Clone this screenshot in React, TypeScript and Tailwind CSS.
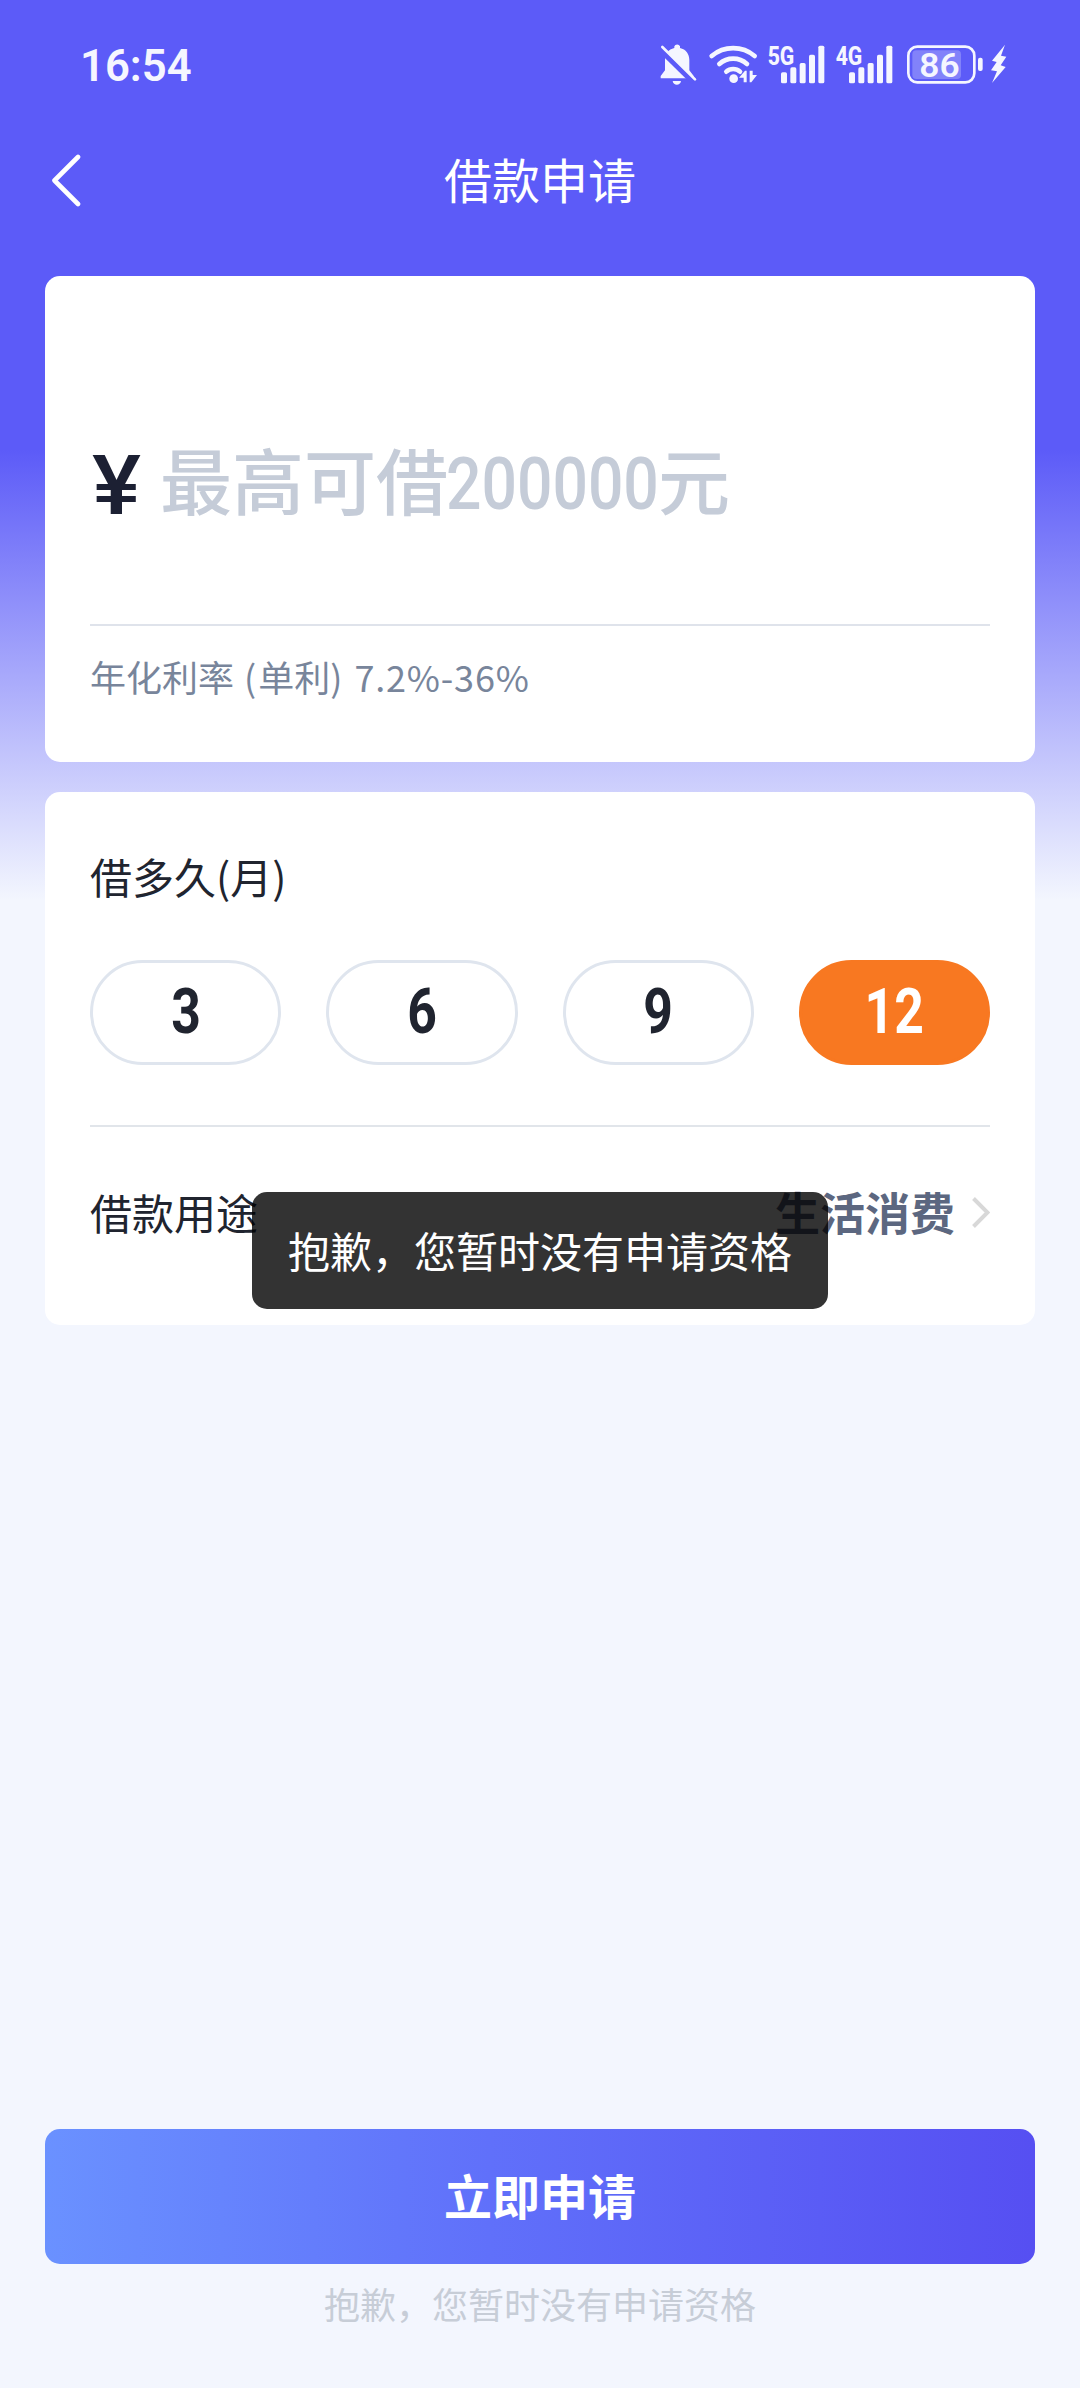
import { useState } from 'react'
import clsx from 'clsx'

const terms = [3, 6, 9, 12]

const bars = [
    { x: 42, y: 97 },
    { x: 70, y: 82 },
    { x: 98, y: 69 },
    { x: 126, y: 44 },
    { x: 154, y: 17 },
]

function Signal({ label }: { label: string }) {
    return (
        <svg className="h-[50px] w-[59px]" viewBox="0 0 177 150" fill="#f5f6ff">
            <text
                x="2" y="74" fontSize="75" fontWeight="800" textLength="80" lengthAdjust="spacingAndGlyphs"
                className="font-[Roboto,sans-serif]"
            >
                {label}
            </text>
            {bars.map(({ x, y }) => (
                <rect key={x} x={x} y={y} width="18" height={130 - y} rx="5" />
            ))}
        </svg>
    )
}

function StatusBar() {
    return (
        <div className="flex h-[120px] items-start justify-between pt-10 pr-[73px] pl-20 text-[#f5f6ff]">
            <span className="origin-left scale-x-[0.97] pt-px font-[Roboto,sans-serif] text-[45px] leading-[50px] font-semibold">16:54</span>
            <div className="flex">
                {/* Muted bell */}
                <svg className="mr-[11px] h-[50px] w-[37px]" viewBox="60 30 111 150" fill="#f5f6ff">
                    <path d="M103 49a9 8 0 0 1 17 0v5c18 4 28 18 28 36v31l13 17v7H62v-7l13-17V90c0-18 10-32 28-36z" />
                    <path d="M98 153h25c-2 15-23 15-25 0z" />
                    <path d="M57 55L160 156" stroke="#5c5bf8" strokeWidth="17" />
                    <path d="M67 51L165 148" stroke="#f5f6ff" strokeWidth="8" strokeLinecap="round" />
                </svg>
                {/* Wi-Fi with traffic arrows */}
                <svg className="mr-[9px] h-[50px] w-[50px]" viewBox="204 30 150 150" fill="#f5f6ff">
                    <g fill="none" stroke="#f5f6ff" strokeWidth="14" strokeLinecap="round">
                        <path d="M215 78A100 100 0 0 1 344 78" />
                        <path d="M238 102A62 62 0 0 1 321 102" />
                        <path d="M259 125A30 30 0 0 1 300 125" />
                    </g>
                    <circle cx="281" cy="146" r="13" />
                    <path d="M297 143L315 122H320V157H311V143Z" />
                    <path d="M329 122H338V135H351L334 157H329Z" />
                </svg>
                <div className="flex gap-[9px]">
                    <Signal label="5G" />
                    <Signal label="4G" />
                </div>
                {/* Battery */}
                <svg className="ml-[13px] h-[50px] w-[77px]" viewBox="801 30 231 150" fill="#f5f6ff">
                    <rect x="817" y="61" width="146" height="86" rx="12" opacity="0.25" />
                    <rect x="805" y="50" width="198" height="107" rx="27" fill="none" stroke="#f5f6ff" strokeWidth="8" />
                    <rect x="1014" y="83" width="14" height="40" rx="6" />
                    <text
                        x="838" y="140" fontSize="101" fontWeight="600" textLength="121" lengthAdjust="spacingAndGlyphs"
                        className="font-[Roboto,sans-serif]"
                    >
                        86
                    </text>
                </svg>
                <svg className="ml-[5px] h-[50px] w-[18px]" viewBox="1047 30 54 150" fill="#f5f6ff">
                    <path d="M1095 44L1056 92L1070 96L1053 121L1071 124L1056 159L1097 111L1082 106L1099 80L1083 77Z" />
                </svg>
            </div>
        </div>
    )
}

export default function App() {
    const [term, setTerm] = useState(12)

    return (
        <div className="relative flex h-[2388px] w-[1080px] flex-col bg-[#f3f6fe] bg-[linear-gradient(180deg,#5c5bf8_50%,#f3f6fe_100%)] bg-[length:100%_900px] bg-no-repeat font-['Noto_Sans_CJK_SC',sans-serif]">
            <StatusBar />

            {/* Title bar */}
            <header className="grid h-[120px] grid-cols-[1fr_auto_1fr] items-center px-[50px]">
                <svg className="h-[54px] w-8" viewBox="0 0 32 54" fill="none" stroke="white" strokeWidth="4.6" strokeLinecap="round" strokeLinejoin="round">
                    <path d="M28 4L4.500 27.500L28 51" />
                </svg>
                <h1 className="pb-1 text-[48px] leading-[60px] text-white">借款申请</h1>
            </header>

            <main className="mt-9 flex flex-col gap-[30px] px-[45px]">
                {/* Amount */}
                <section className="h-[486px] rounded-[15px] bg-white px-[45px] pt-[150px]">
                    <div className="flex h-[110px] items-center">
                        <span className="w-[70px] pt-[10px] pl-[2px]">
                            <span className="inline-block origin-left scale-x-[1.1] font-[Roboto,sans-serif] text-[84px] leading-[110px] font-medium text-[#1c2033]">¥</span>
                        </span>
                        <div className="flex items-baseline text-[72px] leading-[110px] font-medium whitespace-nowrap text-[#c5ccd8]">
                            <span>最高可借</span>
                            <span className="w-[210px]">
                                <span className="inline-block origin-left -translate-x-0.5 scale-x-[0.855] font-[Roboto,sans-serif] text-[73px]">200000</span>
                            </span>
                            <span>元</span>
                        </div>
                    </div>
                    <div className="mt-[88px] h-[2px] bg-[#dfe3eb]" />
                    <p className="mt-[23px] text-[36px] leading-[54px] whitespace-pre text-[#78859b]">
                        年化利率
                        <span className="tracking-[2px]"> (</span>
                        单利
                        <span className="tracking-[2px]">) </span>
                        <span className="tracking-[0.8px]">7.2%-36%</span>
                    </p>
                </section>

                {/* Term and purpose */}
                <section className="h-[533px] rounded-[15px] bg-white px-[45px] pt-[54px]">
                    <h2 className="text-[42px] leading-[60px] text-[#20242f]">借多久(月)</h2>
                    <div className="mt-[54px] grid grid-cols-4 gap-[45px]">
                        {terms.map((n) => (
                            <button
                                key={n}
                                onClick={() => setTerm(n)}
                                className={clsx(
                                    'flex h-[105px] items-center justify-center rounded-full border-[3px] pb-0.5 font-[Roboto,sans-serif] text-[63px] leading-none font-bold',
                                    n === term
                                        ? 'border-[#f87821] bg-[#f87821] text-white'
                                        : 'border-[#dfe5ee] bg-white text-[#20242f]'
                                )}
                            >
                                <span className="scale-x-[0.82]">{n}</span>
                            </button>
                        ))}
                    </div>
                    <div className="mt-[60px] h-[2px] bg-[#e1e5ea]" />
                    <div className="flex h-[168px] items-center justify-between pt-0.5 leading-[60px]">
                        <span className="text-[42px] text-[#20242f]">借款用途</span>
                        <div className="flex items-center">
                            <span className="text-[45px] font-bold text-[#5c6780]">生活消费</span>
                            <svg className="ml-[15px] h-8 w-5" viewBox="0 0 20 32" fill="none" stroke="#d8d8d8" strokeWidth="4">
                                <path d="M3.500 2.500L17.500 16.500L3.500 30.500" />
                            </svg>
                        </div>
                    </div>
                </section>
            </main>

            {/* Submit */}
            <footer className="mt-auto h-[259px] px-[45px]">
                <button className="h-[135px] w-full rounded-[15px] bg-[linear-gradient(90deg,#6a91ff,#6070fa_45%,#564ff2)] pb-[5px] text-[48px] font-bold text-white">
                    立即申请
                </button>
                <p className="mt-3 text-center text-[36px] leading-[54px] text-[#c7cdd7]">抱歉，您暂时没有申请资格</p>
            </footer>

            {/* Toast */}
            <div className="absolute top-[1192px] left-1/2 flex h-[117px] w-[576px] -translate-x-1/2 items-center justify-center rounded-[15px] bg-black/80 pb-0.5 text-[42px] whitespace-nowrap text-white">
                抱歉，您暂时没有申请资格
            </div>
        </div>
    )
}
